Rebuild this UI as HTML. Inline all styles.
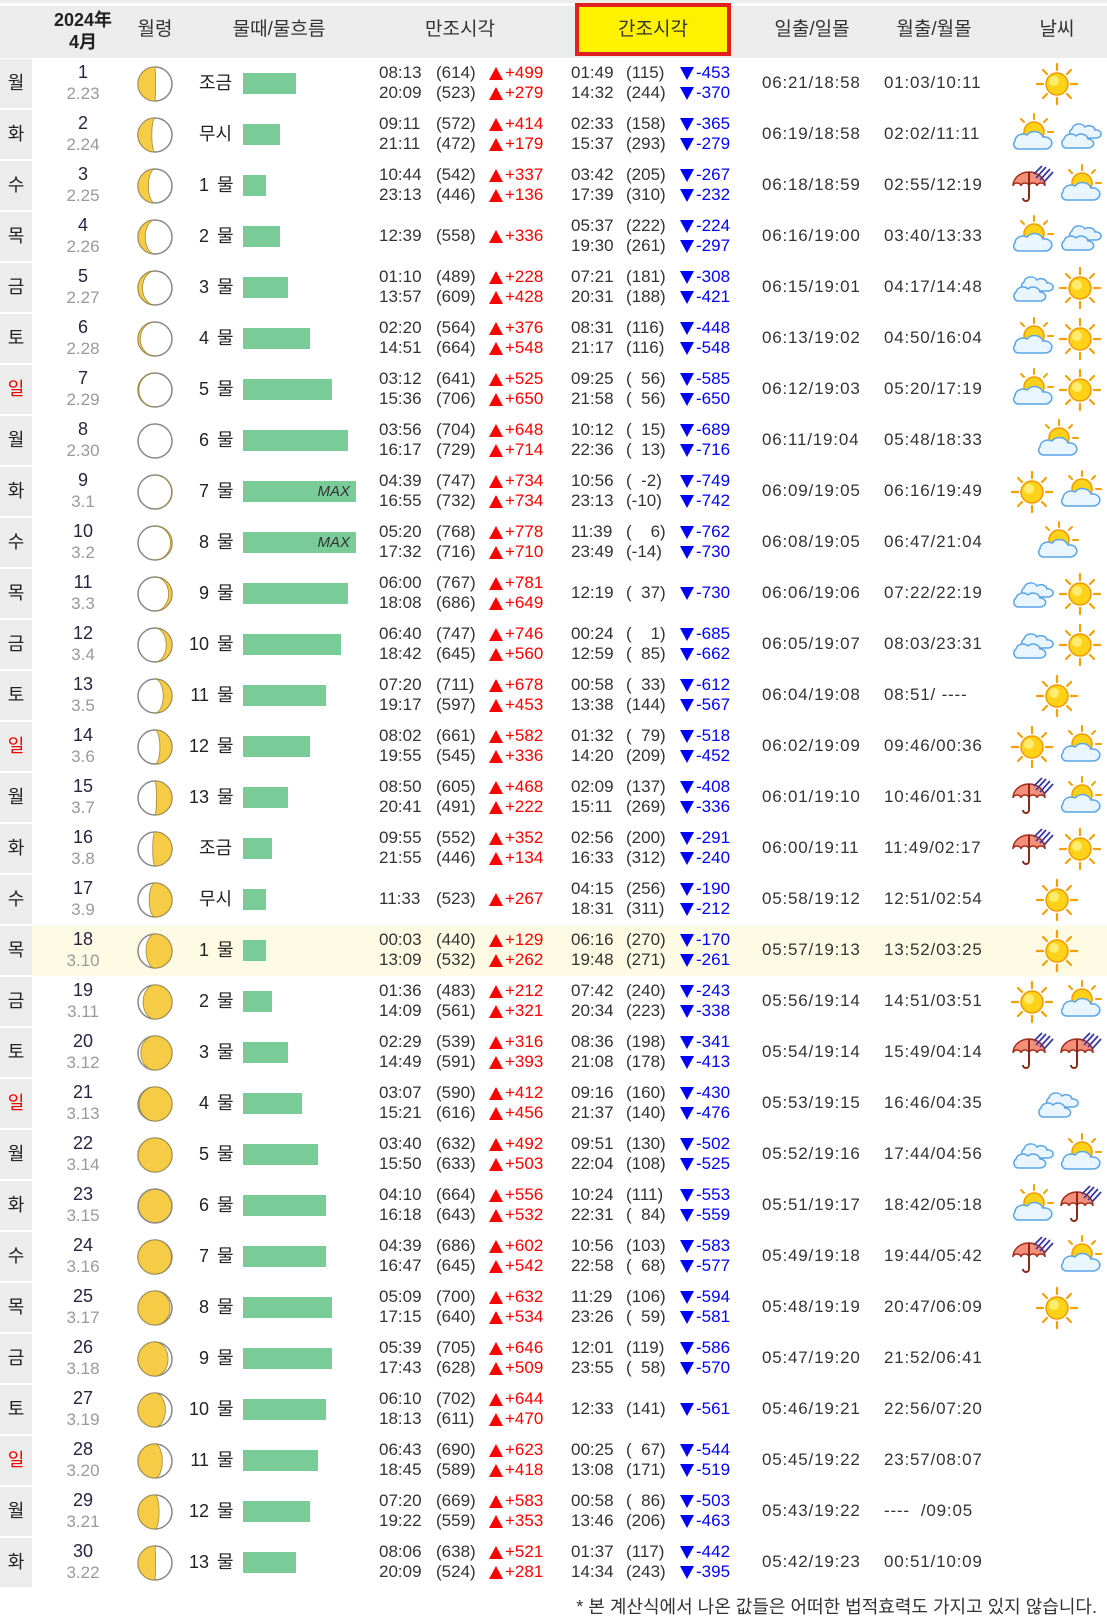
<!DOCTYPE html>
<html><head><meta charset="utf-8">
<style>
body{margin:0;width:1107px;height:1624px;position:relative;background:#fff;font-family:"Liberation Sans","Noto Sans CJK KR",sans-serif;color:#333;overflow:hidden}
.abs{position:absolute}
.hd{position:absolute;top:6px;left:0;width:1107px;height:52px;background:#ececec}
.hl{position:absolute;top:0;left:0;width:1107px;height:3px;background:#eee}
.ht{position:absolute;top:18px;font-size:19px;color:#333;text-align:center;line-height:24px}
.r{position:absolute;left:0;width:1107px;height:51px}
.hi{background:#fefbe4}
.d{position:absolute;left:0;top:1px;width:32px;height:49px;background:#ececec;text-align:center;line-height:49px;font-size:18px;color:#222}
.sun{color:#e00}
.n1{position:absolute;left:50px;width:66px;text-align:center;top:3px;font-size:18px;line-height:22px;color:#2a2440}
.n2{position:absolute;left:50px;width:66px;text-align:center;top:25px;font-size:17px;line-height:22px;color:#9a9a9a}
.m{position:absolute;left:136px;top:7px}
.tl{position:absolute;left:199px;top:13px;font-size:18px;line-height:24px;color:#222}
.tn{position:absolute;left:170px;width:39px;text-align:right;top:13px;font-size:18px;line-height:24px;color:#222}
.tm{position:absolute;left:217px;top:13px;font-size:18px;line-height:24px;color:#222}
.bar{position:absolute;left:243px;top:15px;height:21px;background:#79cc98}
.mx{position:absolute;right:6px;top:1px;font-size:15px;font-style:italic;color:#333;line-height:20px}
.x{position:absolute;font-size:17px;line-height:20px;color:#333;white-space:pre;height:20px;width:170px}
.x1{top:5px}.x2{top:25px}.x0{top:15px}
.H{left:379px}.L{left:571px}
.x span{position:absolute;top:0}
.b{left:57px}.H .c{left:110px;color:#f00}.L .b{left:55px}.L .c{left:109px;color:#00f}
.x .c{padding-left:16px}
.c i{position:absolute;left:0;top:4px;font-size:0;width:0;height:0;border-left:7px solid transparent;border-right:7px solid transparent}
.H .c i{border-bottom:13px solid #f00}
.L .c i{border-top:13px solid #00f}
.s1{position:absolute;left:762px;top:15px;font-size:17px;line-height:20px;letter-spacing:0.8px;color:#333;white-space:pre}
.s2{position:absolute;left:884px;top:15px;font-size:17px;line-height:20px;letter-spacing:0.8px;color:#333;white-space:pre}
.w{position:absolute;top:4px}
</style></head><body>
<svg width="0" height="0" style="position:absolute">
<defs>
<symbol id="sun" viewBox="0 0 44 44">
<g stroke="#f5a000" stroke-width="2.2" stroke-linecap="round">
<line x1="22" y1="2" x2="22" y2="8"/><line x1="22" y1="36" x2="22" y2="42"/><line x1="2" y1="22" x2="8" y2="22"/><line x1="36" y1="22" x2="42" y2="22"/>
<line x1="8" y1="8" x2="12" y2="12"/><line x1="36" y1="8" x2="32" y2="12"/><line x1="8" y1="36" x2="12" y2="32"/><line x1="36" y1="36" x2="32" y2="32"/></g>
<circle cx="22" cy="22" r="11" fill="#ffd21a" stroke="#f39a00" stroke-width="1.5"/>
<circle cx="19" cy="19" r="5" fill="#ffec70"/>
</symbol>
<symbol id="cloud" viewBox="0 0 44 44">
<path d="M14 16a7 6 0 0 1 13-2a6 5 0 0 1 10 3a5 4 0 0 1 2 8h-24a5 5 0 0 1-1-9z" fill="#e9f5ff" stroke="#5aa5e6" stroke-width="1.5"/>
<path d="M6 26a7 6 0 0 1 12-3a7 6 0 0 1 12 3a5 4 0 0 1 0 9h-22a5 5 0 0 1-2-9z" fill="#e9f5ff" stroke="#5aa5e6" stroke-width="1.5"/>
</symbol>
<symbol id="sc" viewBox="0 0 44 44">
<g stroke="#f5a000" stroke-width="2" stroke-linecap="round">
<line x1="24" y1="1" x2="24" y2="6"/><line x1="11" y1="6" x2="14" y2="9"/><line x1="37" y1="6" x2="34" y2="9"/><line x1="38" y1="19" x2="43" y2="19"/></g>
<circle cx="24" cy="19" r="10" fill="#ffd21a" stroke="#f39a00" stroke-width="1.5"/>
<path d="M5 28a8 7 0 0 1 12-6a9 8 0 0 1 16 2a6 5 0 0 1 3 12h-28a6 5 0 0 1-3-8z" fill="#e9f5ff" stroke="#5aa5e6" stroke-width="1.5"/>
</symbol>
<symbol id="um" viewBox="0 0 44 44">
<path d="M3 22a16 14 0 0 1 32 0a4 3 0 0 0-8 0a4 3 0 0 0-8 0a4 3 0 0 0-8 0a4 3 0 0 0-8 0z" fill="#f4907a" stroke="#a42a1a" stroke-width="1.5"/>
<path d="M19 8v26a3 3 0 0 1-6 0" fill="none" stroke="#8a2a1a" stroke-width="2"/>
<g stroke="#3a3aa0" stroke-width="1.8"><line x1="26" y1="14" x2="36" y2="3"/><line x1="30" y1="16" x2="40" y2="5"/><line x1="34" y1="18" x2="43" y2="8"/><line x1="24" y1="10" x2="32" y2="2"/></g>
</symbol>
</defs></svg>

<div class="hl"></div>
<div class="hd"></div>
<div class="abs" style="left:575px;top:3px;width:148px;height:45px;background:#fff200;border:4px solid #e02020"></div>
<div class="ht" style="left:43px;width:80px;top:9px;font-weight:bold;color:#222;font-size:18px;line-height:22px">2024年<br>4月</div>
<div class="ht" style="left:125px;width:60px">월령</div>
<div class="ht" style="left:209px;width:140px">물때/물흐름</div>
<div class="ht" style="left:400px;width:120px">만조시각</div>
<div class="ht" style="left:593px;width:120px">간조시각</div>
<div class="ht" style="left:757px;width:110px">일출/일몰</div>
<div class="ht" style="left:879px;width:110px">월출/월몰</div>
<div class="ht" style="left:1027px;width:60px">날씨</div>

<!-- 1 -->
<div class="r" style="top:58px"><div class="d">월</div><div class="n1">1</div><div class="n2">2.23</div>
<svg class="m" width="38" height="38"><circle cx="19" cy="19" r="17" fill="#fff" stroke="#888" stroke-width="1.5"/><path transform="translate(1 1)" d="M18 1A17 17 0 0 0 18 35A0.5 17 0 0 0 18 1Z" fill="#f6cb45" stroke="#a08a40" stroke-width="0.8"/></svg>
<div class="tl">조금</div><div class="bar" style="width:53px"></div>
<div class="x x1 H"><span>08:13</span><span class="b">(614)</span><span class="c"><i>▲</i>+499</span></div>
<div class="x x2 H"><span>20:09</span><span class="b">(523)</span><span class="c"><i>▲</i>+279</span></div>
<div class="x x1 L"><span>01:49</span><span class="b">(115)</span><span class="c"><i>▼</i>-453</span></div>
<div class="x x2 L"><span>14:32</span><span class="b">(244)</span><span class="c"><i>▼</i>-370</span></div>
<div class="s1">06:21/18:58</div><div class="s2">01:03/10:11</div>
<svg class="w" style="left:1035px" width="44" height="44"><use href="#sun"/></svg></div>

<!-- 2 -->
<div class="r" style="top:109px"><div class="d">화</div><div class="n1">2</div><div class="n2">2.24</div>
<svg class="m" width="38" height="38"><circle cx="19" cy="19" r="17" fill="#fff" stroke="#888" stroke-width="1.5"/><path transform="translate(1 1)" d="M18 1A17 17 0 0 0 18 35A3.2 17 0 0 1 18 1Z" fill="#f6cb45" stroke="#a08a40" stroke-width="0.8"/></svg>
<div class="tl">무시</div><div class="bar" style="width:37px"></div>
<div class="x x1 H"><span>09:11</span><span class="b">(572)</span><span class="c"><i>▲</i>+414</span></div>
<div class="x x2 H"><span>21:11</span><span class="b">(472)</span><span class="c"><i>▲</i>+179</span></div>
<div class="x x1 L"><span>02:33</span><span class="b">(158)</span><span class="c"><i>▼</i>-365</span></div>
<div class="x x2 L"><span>15:37</span><span class="b">(293)</span><span class="c"><i>▼</i>-279</span></div>
<div class="s1">06:19/18:58</div><div class="s2">02:02/11:11</div>
<svg class="w" style="left:1010px" width="44" height="44"><use href="#sc"/></svg><svg class="w" style="left:1058px" width="44" height="44"><use href="#cloud"/></svg></div>

<!-- 3 -->
<div class="r" style="top:160px"><div class="d">수</div><div class="n1">3</div><div class="n2">2.25</div>
<svg class="m" width="38" height="38"><circle cx="19" cy="19" r="17" fill="#fff" stroke="#888" stroke-width="1.5"/><path transform="translate(1 1)" d="M18 1A17 17 0 0 0 18 35A6.6 17 0 0 1 18 1Z" fill="#f6cb45" stroke="#a08a40" stroke-width="0.8"/></svg>
<div class="tn">1</div><div class="tm">물</div><div class="bar" style="width:23px"></div>
<div class="x x1 H"><span>10:44</span><span class="b">(542)</span><span class="c"><i>▲</i>+337</span></div>
<div class="x x2 H"><span>23:13</span><span class="b">(446)</span><span class="c"><i>▲</i>+136</span></div>
<div class="x x1 L"><span>03:42</span><span class="b">(205)</span><span class="c"><i>▼</i>-267</span></div>
<div class="x x2 L"><span>17:39</span><span class="b">(310)</span><span class="c"><i>▼</i>-232</span></div>
<div class="s1">06:18/18:59</div><div class="s2">02:55/12:19</div>
<svg class="w" style="left:1010px" width="44" height="44"><use href="#um"/></svg><svg class="w" style="left:1058px" width="44" height="44"><use href="#sc"/></svg></div>

<!-- 4 -->
<div class="r" style="top:211px"><div class="d">목</div><div class="n1">4</div><div class="n2">2.26</div>
<svg class="m" width="38" height="38"><circle cx="19" cy="19" r="17" fill="#fff" stroke="#888" stroke-width="1.5"/><path transform="translate(1 1)" d="M18 1A17 17 0 0 0 18 35A9.8 17 0 0 1 18 1Z" fill="#f6cb45" stroke="#a08a40" stroke-width="0.8"/></svg>
<div class="tn">2</div><div class="tm">물</div><div class="bar" style="width:37px"></div>
<div class="x x0 H"><span>12:39</span><span class="b">(558)</span><span class="c"><i>▲</i>+336</span></div>
<div class="x x1 L"><span>05:37</span><span class="b">(222)</span><span class="c"><i>▼</i>-224</span></div>
<div class="x x2 L"><span>19:30</span><span class="b">(261)</span><span class="c"><i>▼</i>-297</span></div>
<div class="s1">06:16/19:00</div><div class="s2">03:40/13:33</div>
<svg class="w" style="left:1010px" width="44" height="44"><use href="#sc"/></svg><svg class="w" style="left:1058px" width="44" height="44"><use href="#cloud"/></svg></div>

<!-- 5 -->
<div class="r" style="top:262px"><div class="d">금</div><div class="n1">5</div><div class="n2">2.27</div>
<svg class="m" width="38" height="38"><circle cx="19" cy="19" r="17" fill="#fff" stroke="#888" stroke-width="1.5"/><path transform="translate(1 1)" d="M18 1A17 17 0 0 0 18 35A12.5 17 0 0 1 18 1Z" fill="#f6cb45" stroke="#a08a40" stroke-width="0.8"/></svg>
<div class="tn">3</div><div class="tm">물</div><div class="bar" style="width:45px"></div>
<div class="x x1 H"><span>01:10</span><span class="b">(489)</span><span class="c"><i>▲</i>+228</span></div>
<div class="x x2 H"><span>13:57</span><span class="b">(609)</span><span class="c"><i>▲</i>+428</span></div>
<div class="x x1 L"><span>07:21</span><span class="b">(181)</span><span class="c"><i>▼</i>-308</span></div>
<div class="x x2 L"><span>20:31</span><span class="b">(188)</span><span class="c"><i>▼</i>-421</span></div>
<div class="s1">06:15/19:01</div><div class="s2">04:17/14:48</div>
<svg class="w" style="left:1010px" width="44" height="44"><use href="#cloud"/></svg><svg class="w" style="left:1058px" width="44" height="44"><use href="#sun"/></svg></div>

<!-- 6 -->
<div class="r" style="top:313px"><div class="d">토</div><div class="n1">6</div><div class="n2">2.28</div>
<svg class="m" width="38" height="38"><circle cx="19" cy="19" r="17" fill="#fff" stroke="#888" stroke-width="1.5"/><path transform="translate(1 1)" d="M18 1A17 17 0 0 0 18 35A14.7 17 0 0 1 18 1Z" fill="#f6cb45" stroke="#a08a40" stroke-width="0.8"/></svg>
<div class="tn">4</div><div class="tm">물</div><div class="bar" style="width:67px"></div>
<div class="x x1 H"><span>02:20</span><span class="b">(564)</span><span class="c"><i>▲</i>+376</span></div>
<div class="x x2 H"><span>14:51</span><span class="b">(664)</span><span class="c"><i>▲</i>+548</span></div>
<div class="x x1 L"><span>08:31</span><span class="b">(116)</span><span class="c"><i>▼</i>-448</span></div>
<div class="x x2 L"><span>21:17</span><span class="b">(116)</span><span class="c"><i>▼</i>-548</span></div>
<div class="s1">06:13/19:02</div><div class="s2">04:50/16:04</div>
<svg class="w" style="left:1010px" width="44" height="44"><use href="#sc"/></svg><svg class="w" style="left:1058px" width="44" height="44"><use href="#sun"/></svg></div>

<!-- 7 -->
<div class="r" style="top:364px"><div class="d sun">일</div><div class="n1">7</div><div class="n2">2.29</div>
<svg class="m" width="38" height="38"><circle cx="19" cy="19" r="17" fill="#fff" stroke="#888" stroke-width="1.5"/><path transform="translate(1 1)" d="M18 1A17 17 0 0 0 18 35A16.1 17 0 0 1 18 1Z" fill="#f6cb45" stroke="#a08a40" stroke-width="0.8"/></svg>
<div class="tn">5</div><div class="tm">물</div><div class="bar" style="width:89px"></div>
<div class="x x1 H"><span>03:12</span><span class="b">(641)</span><span class="c"><i>▲</i>+525</span></div>
<div class="x x2 H"><span>15:36</span><span class="b">(706)</span><span class="c"><i>▲</i>+650</span></div>
<div class="x x1 L"><span>09:25</span><span class="b">(&#8199;56)</span><span class="c"><i>▼</i>-585</span></div>
<div class="x x2 L"><span>21:58</span><span class="b">(&#8199;56)</span><span class="c"><i>▼</i>-650</span></div>
<div class="s1">06:12/19:03</div><div class="s2">05:20/17:19</div>
<svg class="w" style="left:1010px" width="44" height="44"><use href="#sc"/></svg><svg class="w" style="left:1058px" width="44" height="44"><use href="#sun"/></svg></div>

<!-- 8 -->
<div class="r" style="top:415px"><div class="d">월</div><div class="n1">8</div><div class="n2">2.30</div>
<svg class="m" width="38" height="38"><circle cx="19" cy="19" r="17" fill="#fff" stroke="#888" stroke-width="1.5"/></svg>
<div class="tn">6</div><div class="tm">물</div><div class="bar" style="width:105px"></div>
<div class="x x1 H"><span>03:56</span><span class="b">(704)</span><span class="c"><i>▲</i>+648</span></div>
<div class="x x2 H"><span>16:17</span><span class="b">(729)</span><span class="c"><i>▲</i>+714</span></div>
<div class="x x1 L"><span>10:12</span><span class="b">(&#8199;15)</span><span class="c"><i>▼</i>-689</span></div>
<div class="x x2 L"><span>22:36</span><span class="b">(&#8199;13)</span><span class="c"><i>▼</i>-716</span></div>
<div class="s1">06:11/19:04</div><div class="s2">05:48/18:33</div>
<svg class="w" style="left:1035px" width="44" height="44"><use href="#sc"/></svg></div>

<!-- 9 -->
<div class="r" style="top:466px"><div class="d">화</div><div class="n1">9</div><div class="n2">3.1</div>
<svg class="m" width="38" height="38"><circle cx="19" cy="19" r="17" fill="#fff" stroke="#888" stroke-width="1.5"/><path transform="translate(1 1)" d="M18 1A17 17 0 0 1 18 35A16.6 17 0 0 0 18 1Z" fill="#f6cb45" stroke="#a08a40" stroke-width="0.8"/></svg>
<div class="tn">7</div><div class="tm">물</div><div class="bar" style="width:113px"><span class="mx">MAX</span></div>
<div class="x x1 H"><span>04:39</span><span class="b">(747)</span><span class="c"><i>▲</i>+734</span></div>
<div class="x x2 H"><span>16:55</span><span class="b">(732)</span><span class="c"><i>▲</i>+734</span></div>
<div class="x x1 L"><span>10:56</span><span class="b">(&#8199;-2)</span><span class="c"><i>▼</i>-749</span></div>
<div class="x x2 L"><span>23:13</span><span class="b">(-10)</span><span class="c"><i>▼</i>-742</span></div>
<div class="s1">06:09/19:05</div><div class="s2">06:16/19:49</div>
<svg class="w" style="left:1010px" width="44" height="44"><use href="#sun"/></svg><svg class="w" style="left:1058px" width="44" height="44"><use href="#sc"/></svg></div>

<!-- 10 -->
<div class="r" style="top:517px"><div class="d">수</div><div class="n1">10</div><div class="n2">3.2</div>
<svg class="m" width="38" height="38"><circle cx="19" cy="19" r="17" fill="#fff" stroke="#888" stroke-width="1.5"/><path transform="translate(1 1)" d="M18 1A17 17 0 0 1 18 35A15.5 17 0 0 0 18 1Z" fill="#f6cb45" stroke="#a08a40" stroke-width="0.8"/></svg>
<div class="tn">8</div><div class="tm">물</div><div class="bar" style="width:113px"><span class="mx">MAX</span></div>
<div class="x x1 H"><span>05:20</span><span class="b">(768)</span><span class="c"><i>▲</i>+778</span></div>
<div class="x x2 H"><span>17:32</span><span class="b">(716)</span><span class="c"><i>▲</i>+710</span></div>
<div class="x x1 L"><span>11:39</span><span class="b">(&#8199;&#8199;6)</span><span class="c"><i>▼</i>-762</span></div>
<div class="x x2 L"><span>23:49</span><span class="b">(-14)</span><span class="c"><i>▼</i>-730</span></div>
<div class="s1">06:08/19:05</div><div class="s2">06:47/21:04</div>
<svg class="w" style="left:1035px" width="44" height="44"><use href="#sc"/></svg></div>

<!-- 11 -->
<div class="r" style="top:568px"><div class="d">목</div><div class="n1">11</div><div class="n2">3.3</div>
<svg class="m" width="38" height="38"><circle cx="19" cy="19" r="17" fill="#fff" stroke="#888" stroke-width="1.5"/><path transform="translate(1 1)" d="M18 1A17 17 0 0 1 18 35A13.6 17 0 0 0 18 1Z" fill="#f6cb45" stroke="#a08a40" stroke-width="0.8"/></svg>
<div class="tn">9</div><div class="tm">물</div><div class="bar" style="width:105px"></div>
<div class="x x1 H"><span>06:00</span><span class="b">(767)</span><span class="c"><i>▲</i>+781</span></div>
<div class="x x2 H"><span>18:08</span><span class="b">(686)</span><span class="c"><i>▲</i>+649</span></div>
<div class="x x0 L"><span>12:19</span><span class="b">(&#8199;37)</span><span class="c"><i>▼</i>-730</span></div>
<div class="s1">06:06/19:06</div><div class="s2">07:22/22:19</div>
<svg class="w" style="left:1010px" width="44" height="44"><use href="#cloud"/></svg><svg class="w" style="left:1058px" width="44" height="44"><use href="#sun"/></svg></div>

<!-- 12 -->
<div class="r" style="top:619px"><div class="d">금</div><div class="n1">12</div><div class="n2">3.4</div>
<svg class="m" width="38" height="38"><circle cx="19" cy="19" r="17" fill="#fff" stroke="#888" stroke-width="1.5"/><path transform="translate(1 1)" d="M18 1A17 17 0 0 1 18 35A11.2 17 0 0 0 18 1Z" fill="#f6cb45" stroke="#a08a40" stroke-width="0.8"/></svg>
<div class="tn">10</div><div class="tm">물</div><div class="bar" style="width:98px"></div>
<div class="x x1 H"><span>06:40</span><span class="b">(747)</span><span class="c"><i>▲</i>+746</span></div>
<div class="x x2 H"><span>18:42</span><span class="b">(645)</span><span class="c"><i>▲</i>+560</span></div>
<div class="x x1 L"><span>00:24</span><span class="b">(&#8199;&#8199;1)</span><span class="c"><i>▼</i>-685</span></div>
<div class="x x2 L"><span>12:59</span><span class="b">(&#8199;85)</span><span class="c"><i>▼</i>-662</span></div>
<div class="s1">06:05/19:07</div><div class="s2">08:03/23:31</div>
<svg class="w" style="left:1010px" width="44" height="44"><use href="#cloud"/></svg><svg class="w" style="left:1058px" width="44" height="44"><use href="#sun"/></svg></div>

<!-- 13 -->
<div class="r" style="top:670px"><div class="d">토</div><div class="n1">13</div><div class="n2">3.5</div>
<svg class="m" width="38" height="38"><circle cx="19" cy="19" r="17" fill="#fff" stroke="#888" stroke-width="1.5"/><path transform="translate(1 1)" d="M18 1A17 17 0 0 1 18 35A8.2 17 0 0 0 18 1Z" fill="#f6cb45" stroke="#a08a40" stroke-width="0.8"/></svg>
<div class="tn">11</div><div class="tm">물</div><div class="bar" style="width:83px"></div>
<div class="x x1 H"><span>07:20</span><span class="b">(711)</span><span class="c"><i>▲</i>+678</span></div>
<div class="x x2 H"><span>19:17</span><span class="b">(597)</span><span class="c"><i>▲</i>+453</span></div>
<div class="x x1 L"><span>00:58</span><span class="b">(&#8199;33)</span><span class="c"><i>▼</i>-612</span></div>
<div class="x x2 L"><span>13:38</span><span class="b">(144)</span><span class="c"><i>▼</i>-567</span></div>
<div class="s1">06:04/19:08</div><div class="s2">08:51/ ----</div>
<svg class="w" style="left:1035px" width="44" height="44"><use href="#sun"/></svg></div>

<!-- 14 -->
<div class="r" style="top:721px"><div class="d sun">일</div><div class="n1">14</div><div class="n2">3.6</div>
<svg class="m" width="38" height="38"><circle cx="19" cy="19" r="17" fill="#fff" stroke="#888" stroke-width="1.5"/><path transform="translate(1 1)" d="M18 1A17 17 0 0 1 18 35A4.9 17 0 0 0 18 1Z" fill="#f6cb45" stroke="#a08a40" stroke-width="0.8"/></svg>
<div class="tn">12</div><div class="tm">물</div><div class="bar" style="width:67px"></div>
<div class="x x1 H"><span>08:02</span><span class="b">(661)</span><span class="c"><i>▲</i>+582</span></div>
<div class="x x2 H"><span>19:55</span><span class="b">(545)</span><span class="c"><i>▲</i>+336</span></div>
<div class="x x1 L"><span>01:32</span><span class="b">(&#8199;79)</span><span class="c"><i>▼</i>-518</span></div>
<div class="x x2 L"><span>14:20</span><span class="b">(209)</span><span class="c"><i>▼</i>-452</span></div>
<div class="s1">06:02/19:09</div><div class="s2">09:46/00:36</div>
<svg class="w" style="left:1010px" width="44" height="44"><use href="#sun"/></svg><svg class="w" style="left:1058px" width="44" height="44"><use href="#sc"/></svg></div>

<!-- 15 -->
<div class="r" style="top:772px"><div class="d">월</div><div class="n1">15</div><div class="n2">3.7</div>
<svg class="m" width="38" height="38"><circle cx="19" cy="19" r="17" fill="#fff" stroke="#888" stroke-width="1.5"/><path transform="translate(1 1)" d="M18 1A17 17 0 0 1 18 35A1.4 17 0 0 0 18 1Z" fill="#f6cb45" stroke="#a08a40" stroke-width="0.8"/></svg>
<div class="tn">13</div><div class="tm">물</div><div class="bar" style="width:45px"></div>
<div class="x x1 H"><span>08:50</span><span class="b">(605)</span><span class="c"><i>▲</i>+468</span></div>
<div class="x x2 H"><span>20:41</span><span class="b">(491)</span><span class="c"><i>▲</i>+222</span></div>
<div class="x x1 L"><span>02:09</span><span class="b">(137)</span><span class="c"><i>▼</i>-408</span></div>
<div class="x x2 L"><span>15:11</span><span class="b">(269)</span><span class="c"><i>▼</i>-336</span></div>
<div class="s1">06:01/19:10</div><div class="s2">10:46/01:31</div>
<svg class="w" style="left:1010px" width="44" height="44"><use href="#um"/></svg><svg class="w" style="left:1058px" width="44" height="44"><use href="#sc"/></svg></div>

<!-- 16 -->
<div class="r" style="top:823px"><div class="d">화</div><div class="n1">16</div><div class="n2">3.8</div>
<svg class="m" width="38" height="38"><circle cx="19" cy="19" r="17" fill="#fff" stroke="#888" stroke-width="1.5"/><path transform="translate(1 1)" d="M18 1A17 17 0 0 1 18 35A2.3 17 0 0 1 18 1Z" fill="#f6cb45" stroke="#a08a40" stroke-width="0.8"/></svg>
<div class="tl">조금</div><div class="bar" style="width:29px"></div>
<div class="x x1 H"><span>09:55</span><span class="b">(552)</span><span class="c"><i>▲</i>+352</span></div>
<div class="x x2 H"><span>21:55</span><span class="b">(446)</span><span class="c"><i>▲</i>+134</span></div>
<div class="x x1 L"><span>02:56</span><span class="b">(200)</span><span class="c"><i>▼</i>-291</span></div>
<div class="x x2 L"><span>16:33</span><span class="b">(312)</span><span class="c"><i>▼</i>-240</span></div>
<div class="s1">06:00/19:11</div><div class="s2">11:49/02:17</div>
<svg class="w" style="left:1010px" width="44" height="44"><use href="#um"/></svg><svg class="w" style="left:1058px" width="44" height="44"><use href="#sun"/></svg></div>

<!-- 17 -->
<div class="r" style="top:874px"><div class="d">수</div><div class="n1">17</div><div class="n2">3.9</div>
<svg class="m" width="38" height="38"><circle cx="19" cy="19" r="17" fill="#fff" stroke="#888" stroke-width="1.5"/><path transform="translate(1 1)" d="M18 1A17 17 0 0 1 18 35A5.8 17 0 0 1 18 1Z" fill="#f6cb45" stroke="#a08a40" stroke-width="0.8"/></svg>
<div class="tl">무시</div><div class="bar" style="width:23px"></div>
<div class="x x0 H"><span>11:33</span><span class="b">(523)</span><span class="c"><i>▲</i>+267</span></div>
<div class="x x1 L"><span>04:15</span><span class="b">(256)</span><span class="c"><i>▼</i>-190</span></div>
<div class="x x2 L"><span>18:31</span><span class="b">(311)</span><span class="c"><i>▼</i>-212</span></div>
<div class="s1">05:58/19:12</div><div class="s2">12:51/02:54</div>
<svg class="w" style="left:1035px" width="44" height="44"><use href="#sun"/></svg></div>

<!-- 18 -->
<div class="r" style="top:925px"><div class="abs hi" style="left:32px;top:0;width:1075px;height:51px"></div><div class="d">목</div><div class="n1">18</div><div class="n2">3.10</div>
<svg class="m" width="38" height="38"><circle cx="19" cy="19" r="17" fill="#fff" stroke="#888" stroke-width="1.5"/><path transform="translate(1 1)" d="M18 1A17 17 0 0 1 18 35A9 17 0 0 1 18 1Z" fill="#f6cb45" stroke="#a08a40" stroke-width="0.8"/></svg>
<div class="tn">1</div><div class="tm">물</div><div class="bar" style="width:23px"></div>
<div class="x x1 H"><span>00:03</span><span class="b">(440)</span><span class="c"><i>▲</i>+129</span></div>
<div class="x x2 H"><span>13:09</span><span class="b">(532)</span><span class="c"><i>▲</i>+262</span></div>
<div class="x x1 L"><span>06:16</span><span class="b">(270)</span><span class="c"><i>▼</i>-170</span></div>
<div class="x x2 L"><span>19:48</span><span class="b">(271)</span><span class="c"><i>▼</i>-261</span></div>
<div class="s1">05:57/19:13</div><div class="s2">13:52/03:25</div>
<svg class="w" style="left:1035px" width="44" height="44"><use href="#sun"/></svg></div>

<!-- 19 -->
<div class="r" style="top:976px"><div class="d">금</div><div class="n1">19</div><div class="n2">3.11</div>
<svg class="m" width="38" height="38"><circle cx="19" cy="19" r="17" fill="#fff" stroke="#888" stroke-width="1.5"/><path transform="translate(1 1)" d="M18 1A17 17 0 0 1 18 35A11.9 17 0 0 1 18 1Z" fill="#f6cb45" stroke="#a08a40" stroke-width="0.8"/></svg>
<div class="tn">2</div><div class="tm">물</div><div class="bar" style="width:29px"></div>
<div class="x x1 H"><span>01:36</span><span class="b">(483)</span><span class="c"><i>▲</i>+212</span></div>
<div class="x x2 H"><span>14:09</span><span class="b">(561)</span><span class="c"><i>▲</i>+321</span></div>
<div class="x x1 L"><span>07:42</span><span class="b">(240)</span><span class="c"><i>▼</i>-243</span></div>
<div class="x x2 L"><span>20:34</span><span class="b">(223)</span><span class="c"><i>▼</i>-338</span></div>
<div class="s1">05:56/19:14</div><div class="s2">14:51/03:51</div>
<svg class="w" style="left:1010px" width="44" height="44"><use href="#sun"/></svg><svg class="w" style="left:1058px" width="44" height="44"><use href="#sc"/></svg></div>

<!-- 20 -->
<div class="r" style="top:1027px"><div class="d">토</div><div class="n1">20</div><div class="n2">3.12</div>
<svg class="m" width="38" height="38"><circle cx="19" cy="19" r="17" fill="#fff" stroke="#888" stroke-width="1.5"/><path transform="translate(1 1)" d="M18 1A17 17 0 0 1 18 35A14.2 17 0 0 1 18 1Z" fill="#f6cb45" stroke="#a08a40" stroke-width="0.8"/></svg>
<div class="tn">3</div><div class="tm">물</div><div class="bar" style="width:45px"></div>
<div class="x x1 H"><span>02:29</span><span class="b">(539)</span><span class="c"><i>▲</i>+316</span></div>
<div class="x x2 H"><span>14:49</span><span class="b">(591)</span><span class="c"><i>▲</i>+393</span></div>
<div class="x x1 L"><span>08:36</span><span class="b">(198)</span><span class="c"><i>▼</i>-341</span></div>
<div class="x x2 L"><span>21:08</span><span class="b">(178)</span><span class="c"><i>▼</i>-413</span></div>
<div class="s1">05:54/19:14</div><div class="s2">15:49/04:14</div>
<svg class="w" style="left:1010px" width="44" height="44"><use href="#um"/></svg><svg class="w" style="left:1058px" width="44" height="44"><use href="#um"/></svg></div>

<!-- 21 -->
<div class="r" style="top:1078px"><div class="d sun">일</div><div class="n1">21</div><div class="n2">3.13</div>
<svg class="m" width="38" height="38"><circle cx="19" cy="19" r="17" fill="#fff" stroke="#888" stroke-width="1.5"/><path transform="translate(1 1)" d="M18 1A17 17 0 0 1 18 35A15.8 17 0 0 1 18 1Z" fill="#f6cb45" stroke="#a08a40" stroke-width="0.8"/></svg>
<div class="tn">4</div><div class="tm">물</div><div class="bar" style="width:59px"></div>
<div class="x x1 H"><span>03:07</span><span class="b">(590)</span><span class="c"><i>▲</i>+412</span></div>
<div class="x x2 H"><span>15:21</span><span class="b">(616)</span><span class="c"><i>▲</i>+456</span></div>
<div class="x x1 L"><span>09:16</span><span class="b">(160)</span><span class="c"><i>▼</i>-430</span></div>
<div class="x x2 L"><span>21:37</span><span class="b">(140)</span><span class="c"><i>▼</i>-476</span></div>
<div class="s1">05:53/19:15</div><div class="s2">16:46/04:35</div>
<svg class="w" style="left:1035px" width="44" height="44"><use href="#cloud"/></svg></div>

<!-- 22 -->
<div class="r" style="top:1129px"><div class="d">월</div><div class="n1">22</div><div class="n2">3.14</div>
<svg class="m" width="38" height="38"><circle cx="19" cy="19" r="17" fill="#fff" stroke="#888" stroke-width="1.5"/><path transform="translate(1 1)" d="M18 1A17 17 0 0 1 18 35A16.8 17 0 0 1 18 1Z" fill="#f6cb45" stroke="#a08a40" stroke-width="0.8"/></svg>
<div class="tn">5</div><div class="tm">물</div><div class="bar" style="width:75px"></div>
<div class="x x1 H"><span>03:40</span><span class="b">(632)</span><span class="c"><i>▲</i>+492</span></div>
<div class="x x2 H"><span>15:50</span><span class="b">(633)</span><span class="c"><i>▲</i>+503</span></div>
<div class="x x1 L"><span>09:51</span><span class="b">(130)</span><span class="c"><i>▼</i>-502</span></div>
<div class="x x2 L"><span>22:04</span><span class="b">(108)</span><span class="c"><i>▼</i>-525</span></div>
<div class="s1">05:52/19:16</div><div class="s2">17:44/04:56</div>
<svg class="w" style="left:1010px" width="44" height="44"><use href="#cloud"/></svg><svg class="w" style="left:1058px" width="44" height="44"><use href="#sc"/></svg></div>

<!-- 23 -->
<div class="r" style="top:1180px"><div class="d">화</div><div class="n1">23</div><div class="n2">3.15</div>
<svg class="m" width="38" height="38"><circle cx="19" cy="19" r="17" fill="#f6cb45" stroke="#888" stroke-width="1.5"/></svg>
<div class="tn">6</div><div class="tm">물</div><div class="bar" style="width:83px"></div>
<div class="x x1 H"><span>04:10</span><span class="b">(664)</span><span class="c"><i>▲</i>+556</span></div>
<div class="x x2 H"><span>16:18</span><span class="b">(643)</span><span class="c"><i>▲</i>+532</span></div>
<div class="x x1 L"><span>10:24</span><span class="b">(111)</span><span class="c"><i>▼</i>-553</span></div>
<div class="x x2 L"><span>22:31</span><span class="b">(&#8199;84)</span><span class="c"><i>▼</i>-559</span></div>
<div class="s1">05:51/19:17</div><div class="s2">18:42/05:18</div>
<svg class="w" style="left:1010px" width="44" height="44"><use href="#sc"/></svg><svg class="w" style="left:1058px" width="44" height="44"><use href="#um"/></svg></div>

<!-- 24 -->
<div class="r" style="top:1231px"><div class="d">수</div><div class="n1">24</div><div class="n2">3.16</div>
<svg class="m" width="38" height="38"><circle cx="19" cy="19" r="17" fill="#fff" stroke="#888" stroke-width="1.5"/><path transform="translate(1 1)" d="M18 1A17 17 0 0 0 18 35A16.4 17 0 0 0 18 1Z" fill="#f6cb45" stroke="#a08a40" stroke-width="0.8"/></svg>
<div class="tn">7</div><div class="tm">물</div><div class="bar" style="width:83px"></div>
<div class="x x1 H"><span>04:39</span><span class="b">(686)</span><span class="c"><i>▲</i>+602</span></div>
<div class="x x2 H"><span>16:47</span><span class="b">(645)</span><span class="c"><i>▲</i>+542</span></div>
<div class="x x1 L"><span>10:56</span><span class="b">(103)</span><span class="c"><i>▼</i>-583</span></div>
<div class="x x2 L"><span>22:58</span><span class="b">(&#8199;68)</span><span class="c"><i>▼</i>-577</span></div>
<div class="s1">05:49/19:18</div><div class="s2">19:44/05:42</div>
<svg class="w" style="left:1010px" width="44" height="44"><use href="#um"/></svg><svg class="w" style="left:1058px" width="44" height="44"><use href="#sc"/></svg></div>

<!-- 25 -->
<div class="r" style="top:1282px"><div class="d">목</div><div class="n1">25</div><div class="n2">3.17</div>
<svg class="m" width="38" height="38"><circle cx="19" cy="19" r="17" fill="#fff" stroke="#888" stroke-width="1.5"/><path transform="translate(1 1)" d="M18 1A17 17 0 0 0 18 35A15.1 17 0 0 0 18 1Z" fill="#f6cb45" stroke="#a08a40" stroke-width="0.8"/></svg>
<div class="tn">8</div><div class="tm">물</div><div class="bar" style="width:89px"></div>
<div class="x x1 H"><span>05:09</span><span class="b">(700)</span><span class="c"><i>▲</i>+632</span></div>
<div class="x x2 H"><span>17:15</span><span class="b">(640)</span><span class="c"><i>▲</i>+534</span></div>
<div class="x x1 L"><span>11:29</span><span class="b">(106)</span><span class="c"><i>▼</i>-594</span></div>
<div class="x x2 L"><span>23:26</span><span class="b">(&#8199;59)</span><span class="c"><i>▼</i>-581</span></div>
<div class="s1">05:48/19:19</div><div class="s2">20:47/06:09</div>
<svg class="w" style="left:1035px" width="44" height="44"><use href="#sun"/></svg></div>

<!-- 26 -->
<div class="r" style="top:1333px"><div class="d">금</div><div class="n1">26</div><div class="n2">3.18</div>
<svg class="m" width="38" height="38"><circle cx="19" cy="19" r="17" fill="#fff" stroke="#888" stroke-width="1.5"/><path transform="translate(1 1)" d="M18 1A17 17 0 0 0 18 35A13.1 17 0 0 0 18 1Z" fill="#f6cb45" stroke="#a08a40" stroke-width="0.8"/></svg>
<div class="tn">9</div><div class="tm">물</div><div class="bar" style="width:89px"></div>
<div class="x x1 H"><span>05:39</span><span class="b">(705)</span><span class="c"><i>▲</i>+646</span></div>
<div class="x x2 H"><span>17:43</span><span class="b">(628)</span><span class="c"><i>▲</i>+509</span></div>
<div class="x x1 L"><span>12:01</span><span class="b">(119)</span><span class="c"><i>▼</i>-586</span></div>
<div class="x x2 L"><span>23:55</span><span class="b">(&#8199;58)</span><span class="c"><i>▼</i>-570</span></div>
<div class="s1">05:47/19:20</div><div class="s2">21:52/06:41</div></div>

<!-- 27 -->
<div class="r" style="top:1384px"><div class="d">토</div><div class="n1">27</div><div class="n2">3.19</div>
<svg class="m" width="38" height="38"><circle cx="19" cy="19" r="17" fill="#fff" stroke="#888" stroke-width="1.5"/><path transform="translate(1 1)" d="M18 1A17 17 0 0 0 18 35A10.4 17 0 0 0 18 1Z" fill="#f6cb45" stroke="#a08a40" stroke-width="0.8"/></svg>
<div class="tn">10</div><div class="tm">물</div><div class="bar" style="width:83px"></div>
<div class="x x1 H"><span>06:10</span><span class="b">(702)</span><span class="c"><i>▲</i>+644</span></div>
<div class="x x2 H"><span>18:13</span><span class="b">(611)</span><span class="c"><i>▲</i>+470</span></div>
<div class="x x0 L"><span>12:33</span><span class="b">(141)</span><span class="c"><i>▼</i>-561</span></div>
<div class="s1">05:46/19:21</div><div class="s2">22:56/07:20</div></div>

<!-- 28 -->
<div class="r" style="top:1435px"><div class="d sun">일</div><div class="n1">28</div><div class="n2">3.20</div>
<svg class="m" width="38" height="38"><circle cx="19" cy="19" r="17" fill="#fff" stroke="#888" stroke-width="1.5"/><path transform="translate(1 1)" d="M18 1A17 17 0 0 0 18 35A7.3 17 0 0 0 18 1Z" fill="#f6cb45" stroke="#a08a40" stroke-width="0.8"/></svg>
<div class="tn">11</div><div class="tm">물</div><div class="bar" style="width:75px"></div>
<div class="x x1 H"><span>06:43</span><span class="b">(690)</span><span class="c"><i>▲</i>+623</span></div>
<div class="x x2 H"><span>18:45</span><span class="b">(589)</span><span class="c"><i>▲</i>+418</span></div>
<div class="x x1 L"><span>00:25</span><span class="b">(&#8199;67)</span><span class="c"><i>▼</i>-544</span></div>
<div class="x x2 L"><span>13:08</span><span class="b">(171)</span><span class="c"><i>▼</i>-519</span></div>
<div class="s1">05:45/19:22</div><div class="s2">23:57/08:07</div></div>

<!-- 29 -->
<div class="r" style="top:1486px"><div class="d">월</div><div class="n1">29</div><div class="n2">3.21</div>
<svg class="m" width="38" height="38"><circle cx="19" cy="19" r="17" fill="#fff" stroke="#888" stroke-width="1.5"/><path transform="translate(1 1)" d="M18 1A17 17 0 0 0 18 35A4.1 17 0 0 0 18 1Z" fill="#f6cb45" stroke="#a08a40" stroke-width="0.8"/></svg>
<div class="tn">12</div><div class="tm">물</div><div class="bar" style="width:67px"></div>
<div class="x x1 H"><span>07:20</span><span class="b">(669)</span><span class="c"><i>▲</i>+583</span></div>
<div class="x x2 H"><span>19:22</span><span class="b">(559)</span><span class="c"><i>▲</i>+353</span></div>
<div class="x x1 L"><span>00:58</span><span class="b">(&#8199;86)</span><span class="c"><i>▼</i>-503</span></div>
<div class="x x2 L"><span>13:46</span><span class="b">(206)</span><span class="c"><i>▼</i>-463</span></div>
<div class="s1">05:43/19:22</div><div class="s2">----  /09:05</div></div>

<!-- 30 -->
<div class="r" style="top:1537px"><div class="d">화</div><div class="n1">30</div><div class="n2">3.22</div>
<svg class="m" width="38" height="38"><circle cx="19" cy="19" r="17" fill="#fff" stroke="#888" stroke-width="1.5"/><path transform="translate(1 1)" d="M18 1A17 17 0 0 0 18 35A0.5 17 0 0 0 18 1Z" fill="#f6cb45" stroke="#a08a40" stroke-width="0.8"/></svg>
<div class="tn">13</div><div class="tm">물</div><div class="bar" style="width:53px"></div>
<div class="x x1 H"><span>08:06</span><span class="b">(638)</span><span class="c"><i>▲</i>+521</span></div>
<div class="x x2 H"><span>20:09</span><span class="b">(524)</span><span class="c"><i>▲</i>+281</span></div>
<div class="x x1 L"><span>01:37</span><span class="b">(117)</span><span class="c"><i>▼</i>-442</span></div>
<div class="x x2 L"><span>14:34</span><span class="b">(243)</span><span class="c"><i>▼</i>-395</span></div>
<div class="s1">05:42/19:23</div><div class="s2">00:51/10:09</div></div>

<div class="abs" style="right:10px;top:1595px;font-size:18px;line-height:24px;color:#333;white-space:nowrap">* 본 계산식에서 나온 값들은 어떠한 법적효력도 가지고 있지 않습니다.</div>
</body></html>
